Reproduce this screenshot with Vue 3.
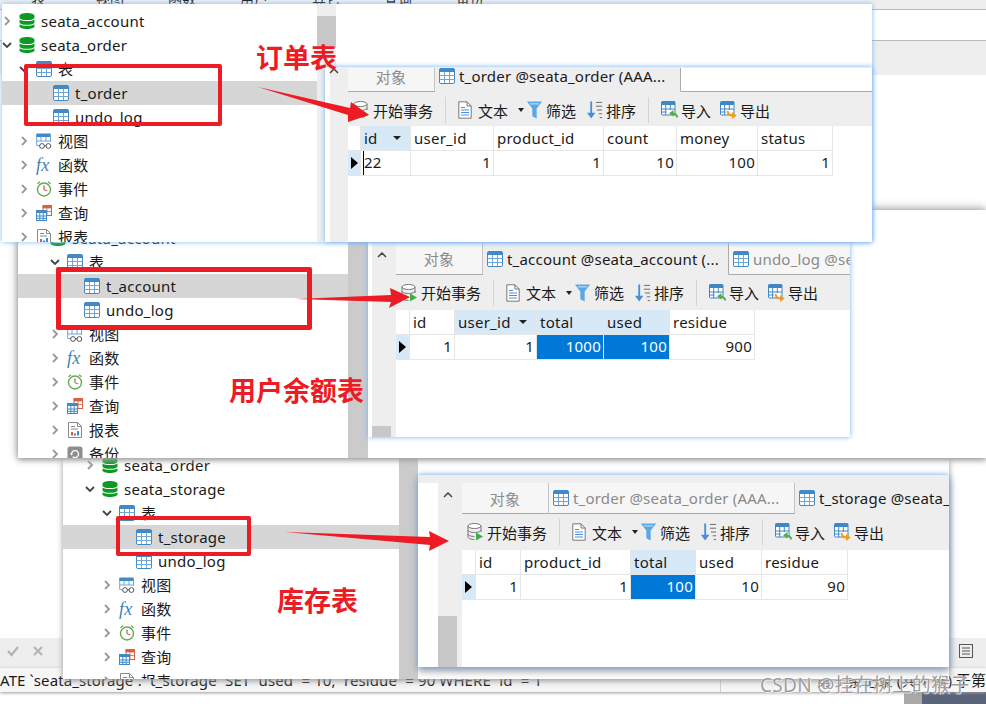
<template>
  <div class="canvas">
    <svg class="defs" width="0" height="0">
      <defs>
        <symbol id="i-db" viewBox="0 0 16 16">
          <path d="M.5 3c0-1.800 3.300-2.900 7.500-2.900s7.500 1.100 7.500 2.900v1.500c0 1.700-3.300 2.600-7.500 2.600S.5 6.200.5 4.500z" fill="#0c9a22"/>
          <path d="M.5 6.500c1.500 1.100 4.200 1.600 7.500 1.600s6-.5 7.500-1.600v2.700c0 1.700-3.300 2.600-7.500 2.600S.5 10.900.5 9.200z" fill="#0c9a22"/>
          <path d="M.5 11.200c1.500 1.100 4.200 1.600 7.500 1.600s6-.5 7.500-1.600v2c0 1.700-3.300 2.700-7.500 2.700S.5 14.900.5 13.200z" fill="#0c9a22"/>
        </symbol>
        <symbol id="i-table" viewBox="0 0 16 16">
          <rect x=".5" y=".5" width="15" height="15" rx="1.500" fill="#fff" stroke="#4289c8"/>
          <path d="M1.500.5h13a1 1 0 0 1 1 1V4H.5V1.500a1 1 0 0 1 1-1z" fill="#4289c8"/>
          <path d="M.5 7.500h15M.5 11.500h15M5.500 4v11M10.500 4v11" stroke="#6ea6d8" fill="none"/>
        </symbol>
        <symbol id="i-view" viewBox="0 0 16 16">
          <path d="M1 .5h13a.8.8 0 0 1 .8.8V4H.2V1.300A.8.8 0 0 1 1 .5z" fill="#4289c8"/>
          <path d="M.7 4v8.500h3M14.500 4v5M.7 8h13.800M5 4v4M10 4v4" stroke="#6ea6d8" fill="none"/>
          <circle cx="6" cy="13" r="2.400" fill="#fff" stroke="#555"/>
          <circle cx="12.400" cy="13" r="2.400" fill="#fff" stroke="#555"/>
          <path d="M8.400 12.800h1.600" stroke="#555"/>
        </symbol>
        <symbol id="i-clock" viewBox="0 0 16 16">
          <circle cx="8" cy="8.500" r="6.500" fill="#fff" stroke="#6aa84f" stroke-width="1.400"/>
          <path d="M8 4.500v4.200" stroke="#666" stroke-width="1.100"/>
          <path d="M8 8.700l3.200 1" stroke="#e0584a" stroke-width="1.100"/>
          <path d="M1.500 2.800L4 .8M14.500 2.800L12 .8" stroke="#6aa84f" stroke-width="1.400"/>
        </symbol>
        <symbol id="i-query" viewBox="0 0 16 16">
          <rect x="7" y=".5" width="8.500" height="10" fill="#fff" stroke="#d8623f"/>
          <path d="M7 .5h8.500v2.500H7zM11 3v7M7 6.500h8.500" fill="#d8623f" stroke="#d8623f" stroke-width=".8"/>
          <rect x=".5" y="5.500" width="10" height="10" fill="#fff" stroke="#4289c8"/>
          <path d="M.5 5.500h10v2.500H.5z" fill="#4289c8"/>
          <path d="M.5 11h10M.5 13.300h10M3.800 8v7.500M7.200 8v7.500" stroke="#4289c8" fill="none"/>
        </symbol>
        <symbol id="i-report" viewBox="0 0 16 16">
          <path d="M1.500.5h9l4 4v11h-13z" fill="#fff" stroke="#8a8a8a"/>
          <path d="M10.500.5v4h4M4 4.500h4M4 7h7" stroke="#8a8a8a" fill="none"/>
          <path d="M4 10h2v3.500H4z" fill="#e0584a"/>
          <path d="M7 11.500h2v2H7z" fill="#4289c8"/>
          <path d="M10 9h2v4.500h-2z" fill="#4289c8"/>
        </symbol>
        <symbol id="i-backup" viewBox="0 0 16 16">
          <rect x=".5" y=".5" width="15" height="15" rx="2.500" fill="#8e8e8e"/>
          <path d="M4.500 8a3.500 3.500 0 1 1 1.200 2.700" fill="none" stroke="#fff" stroke-width="1.300"/>
          <path d="M2.800 7.500h3.400L4.500 9.500z" fill="#fff"/>
        </symbol>
        <symbol id="i-dbplay" viewBox="0 0 17 18">
          <ellipse cx="7.500" cy="3" rx="6.500" ry="2.500" fill="#fff" stroke="#777"/>
          <path d="M1 3v11c0 1.400 3 2.500 6.500 2.500M14 3v6M1 7c0 1.400 3 2.500 6.500 2.500S14 8.400 14 7M1 11c0 1.400 3 2.500 6.500 2.500" fill="none" stroke="#777"/>
          <path d="M9 9.500l7 4-7 4z" fill="#3fae49"/>
        </symbol>
        <symbol id="i-doc" viewBox="0 0 14 18">
          <path d="M.8.800h8.200l4.200 4.200v12.200H.8z" fill="#fff" stroke="#777"/>
          <path d="M9 .8v4.200h4.200" fill="none" stroke="#777"/>
          <path d="M3 6.500h4M3 9h8M3 11.500h8M3 14h8" stroke="#4a90d9"/>
        </symbol>
        <symbol id="i-filter" viewBox="0 0 17 19">
          <path d="M.5.500h16L10.800 8v10.500L6.200 16V8z" fill="#5aa8e6"/>
          <path d="M3.800 3h9.400" stroke="#bcdcf5" stroke-width="1.200"/>
        </symbol>
        <symbol id="i-sort" viewBox="0 0 17 19">
          <path d="M5 .5v14" stroke="#4a90d9" stroke-width="2"/>
          <path d="M.5 12.500h9L5 18.500z" fill="#4a90d9"/>
          <path d="M10 1.500h6.500M10 5.500h6.500M11 9.500h5.500M13 13.500h3.500M14 17.500h2.500" stroke="#666"/>
        </symbol>
        <symbol id="i-import" viewBox="0 0 17 18">
          <rect x=".5" y=".5" width="13.500" height="13.500" rx="1" fill="#fff" stroke="#3f86c6"/>
          <path d="M.5.500H14V4H.5z" fill="#3f86c6"/>
          <path d="M.5 8h13.500M.5 11h5M4.700 4v10M9.300 4v5" stroke="#3f86c6" fill="none"/>
          <path d="M16.500 16.500c-1-3-3-4-5.500-4" fill="none" stroke="#4fae3f" stroke-width="2"/>
          <path d="M12.500 9v6.500L8 12.300z" fill="#4fae3f"/>
        </symbol>
        <symbol id="i-export" viewBox="0 0 17 18">
          <rect x=".5" y=".5" width="13.500" height="13.500" rx="1" fill="#fff" stroke="#3f86c6"/>
          <path d="M.5.500H14V4H.5z" fill="#3f86c6"/>
          <path d="M.5 8h13.500M.5 11h5M4.700 4v10M9.300 4v5" stroke="#3f86c6" fill="none"/>
          <path d="M7.500 10c.5 3 2.500 4.500 5 4.500" fill="none" stroke="#f39a1f" stroke-width="2"/>
          <path d="M12 11v7l4.700-3.500z" fill="#f39a1f"/>
        </symbol>
      </defs>
    </svg>

    <!-- app behind the three pasted windows -->
    <div class="base">
      <div class="menu">
        <span v-for="m in menu" :key="m">{{ m }}</span>
      </div>
      <div class="blank"></div>
      <div class="band"></div>
      <div class="fill"></div>
      <div class="tools">
        <svg class="act" viewBox="0 0 12 12"><path d="M1 6l3.500 4L11 2" /></svg>
        <svg class="act" viewBox="0 0 12 12"><path d="M2 2l8 8M10 2l-8 8" /></svg>
        <span class="tools-gap"></span>
        <svg class="form-ic" viewBox="0 0 14 14"><rect x=".5" y=".5" width="13" height="13"/><path d="M3 4h8M3 7h8M3 10h8"/></svg>
      </div>
      <div class="status">
        <span class="sql">ATE `seata_storage`. `t_storage` SET `used` = 10, `residue` = 90 WHERE `id` = 1</span>
        <i class="status-sep"></i>
        <span class="pos">第 1 条记录 (共 1 条) 于第</span>
      </div>
      <div class="foot"><i class="foot-gray"></i><i class="foot-dark"></i></div>
    </div>

    <div v-for="w in windows" :key="w.id" class="win" :class="w.id">
      <div class="tree" :style="{ width: w.treeW + 'px', paddingTop: w.treeTop + 'px' }">
        <div
          v-for="r in w.rows"
          :key="r.label"
          class="row"
          :class="{ sel: r.sel, zh: r.lv === 1 }"
          :style="{ paddingLeft: w.indent + r.lv * 17 + 'px' }"
        >
          <span class="chev">
            <svg v-if="r.chev" viewBox="0 0 10 10" :class="r.chev"><path d="M3 1l4 4-4 4" /></svg>
          </span>
          <span v-if="r.icon === 'fx'" class="fx">fx</span>
          <svg v-else class="ic"><use :href="'#i-' + r.icon" /></svg>
          <span class="lb">{{ r.label }}</span>
        </div>
      </div>
      <div class="scroll"><i></i></div>

      <div class="panel">
        <div class="strip"></div>
        <div class="body">
          <div class="gutter">
            <div class="gut-in">
              <svg class="up" viewBox="0 0 10 6"><path d="M1 5l4-4 4 4" /></svg>
              <i class="thumb"></i>
            </div>
          </div>
          <div class="main">
            <div class="tabs">
              <div v-for="t in w.tabs" :key="t.text" class="tab" :class="{ on: t.on, plain: !t.icon }" :style="{ width: t.w + 'px' }">
                <svg v-if="t.icon" class="ic"><use href="#i-table" /></svg>
                <span>{{ t.text }}</span>
              </div>
              <div class="tab-rest"></div>
            </div>
            <div class="bar">
              <div class="btn b-db"><svg class="ti"><use href="#i-dbplay" /></svg>开始事务</div>
              <i class="sep"></i>
              <div class="btn b-doc"><svg class="ti doc"><use href="#i-doc" /></svg>文本<b class="caret"></b></div>
              <div class="btn b-fil"><svg class="ti"><use href="#i-filter" /></svg>筛选</div>
              <div class="btn b-sort"><svg class="ti"><use href="#i-sort" /></svg>排序</div>
              <i class="sep"></i>
              <div class="btn b-imp"><svg class="ti"><use href="#i-import" /></svg>导入</div>
              <div class="btn"><svg class="ti"><use href="#i-export" /></svg>导出</div>
            </div>
            <div class="grid" :style="{ gridTemplateColumns: w.cols.map(c => c + 'px').join(' ') }">
              <div class="c head"></div>
              <div v-for="h in w.head" :key="h.t" class="c head" :class="{ hl: h.hl }">
                {{ h.t }}<b v-if="h.sort" class="caret sort"></b>
              </div>
              <div class="c ind"><b></b></div>
              <div
                v-for="(v, i) in w.cells"
                :key="i"
                class="c val"
                :class="{ picked: w.picked.includes(i), cur: w.cursor === i }"
              >{{ v }}</div>
            </div>
          </div>
        </div>
      </div>
    </div>

    <!-- red marks added on top of the screenshots -->
    <i class="mark m1"></i>
    <i class="mark m2"></i>
    <i class="mark m3"></i>
    <svg class="arrows" viewBox="0 0 986 704">
      <polygon points="258,87 350,108 351,102 369,115 348,122 348,115" />
      <polygon points="295,299 391,295 390,288 410,297 389,308 391,302" />
      <polygon points="285,532 430,537 429,531 449,541 429,551 430,545" />
    </svg>
    <b class="note n1">订单表</b>
    <b class="note n2">用户余额表</b>
    <b class="note n3">库存表</b>
    <div class="mark-csdn">CSDN @挂在树上的猴子</div>
  </div>
</template>

<script setup>
const menu = ['表', '视图', '函数', '用户', '其它', '查询', '备份']

function tail() {
  return [
    { lv: 1, chev: 'r', icon: 'view', label: '视图' },
    { lv: 1, chev: 'r', icon: 'fx', label: '函数' },
    { lv: 1, chev: 'r', icon: 'clock', label: '事件' },
    { lv: 1, chev: 'r', icon: 'query', label: '查询' },
    { lv: 1, chev: 'r', icon: 'report', label: '报表' },
  ]
}

const windows = [
  {
    id: 'w3',
    treeW: 336,
    treeTop: 0,
    indent: 22,
    rows: [
      { lv: 0, chev: 'r', icon: 'db', label: 'seata_order' },
      { lv: 0, chev: 'd', icon: 'db', label: 'seata_storage' },
      { lv: 1, chev: 'd', icon: 'table', label: '表' },
      { lv: 2, icon: 'table', label: 't_storage', sel: true },
      { lv: 2, icon: 'table', label: 'undo_log' },
      ...tail(),
    ],
    tabs: [
      { text: '对象', w: 87 },
      { text: 't_order @seata_order (AAA...', w: 246, icon: true },
      { text: 't_storage @seata_order', w: 200, icon: true, on: true },
    ],
    cols: [14, 45, 110, 65, 66, 86],
    head: [{ t: 'id' }, { t: 'product_id' }, { t: 'total', hl: true }, { t: 'used' }, { t: 'residue' }],
    cells: ['1', '1', '100', '10', '90'],
    picked: [2],
  },
  {
    id: 'w2',
    treeW: 330,
    treeTop: 16,
    indent: 15,
    rows: [
      { lv: 0, chev: 'd', icon: 'db', label: 'seata_account' },
      { lv: 1, chev: 'd', icon: 'table', label: '表' },
      { lv: 2, icon: 'table', label: 't_account', sel: true },
      { lv: 2, icon: 'table', label: 'undo_log' },
      ...tail(),
      { lv: 1, chev: 'r', icon: 'backup', label: '备份' },
    ],
    tabs: [
      { text: '对象', w: 87 },
      { text: 't_account @seata_account (...', w: 246, icon: true, on: true },
      { text: 'undo_log @seata_account', w: 200, icon: true },
    ],
    cols: [14, 45, 82, 67, 66, 85],
    head: [{ t: 'id' }, { t: 'user_id', hl: true, sort: true }, { t: 'total', hl: true }, { t: 'used', hl: true }, { t: 'residue' }],
    cells: ['1', '1', '1000', '100', '900'],
    picked: [2, 3],
  },
  {
    id: 'w1',
    treeW: 315,
    treeTop: 5,
    indent: 0,
    rows: [
      { lv: 0, chev: 'r', icon: 'db', label: 'seata_account' },
      { lv: 0, chev: 'd', icon: 'db', label: 'seata_order' },
      { lv: 1, chev: 'd', icon: 'table', label: '表' },
      { lv: 2, icon: 'table', label: 't_order', sel: true },
      { lv: 2, icon: 'table', label: 'undo_log' },
      ...tail(),
    ],
    tabs: [
      { text: '对象', w: 87 },
      { text: 't_order @seata_order (AAA...', w: 246, icon: true, on: true },
    ],
    cols: [13, 50, 83, 110, 73, 81, 75],
    head: [{ t: 'id', hl: true, sort: true }, { t: 'user_id' }, { t: 'product_id' }, { t: 'count' }, { t: 'money' }, { t: 'status' }],
    cells: ['22', '1', '1', '10', '100', '1'],
    picked: [],
    cursor: 0,
  },
]
</script>

<style>
html, body { background: #fff; }
</style>

<style scoped>
.canvas { position: relative; width: 986px; height: 704px; overflow: hidden; background: #fff; font-family: "Noto Sans", "Noto Sans CJK SC", sans-serif; font-size: 15px; color: #1a1a1a; }
.defs { position: absolute; }

.base { position: absolute; inset: 0; display: flex; flex-direction: column; }
.menu { height: 9px; flex: none; overflow: hidden; background: #eee; border-bottom: 1px solid #b8b8b8; display: flex; padding-left: 2px; }
.menu span { width: 72px; flex: none; text-align: center; font-size: 14px; line-height: 18px; margin-top: -10px; height: 18px; }
.blank { height: 30px; flex: none; border-bottom: 1px solid #b8b8b8; }
.band { height: 34px; flex: none; background: #eee; }
.fill { flex: 1; }
.tools { height: 30px; flex: none; background: #eee; display: flex; align-items: center; padding: 0 13px 4px 7px; box-sizing: border-box; gap: 13px; }
.act { width: 12px; height: 12px; fill: none; stroke: #b4b4b4; stroke-width: 2.200; }
.tools-gap { flex: 1; }
.form-ic { width: 14px; height: 14px; fill: none; stroke: #555; }
.status { height: 24px; flex: none; background: #f6f6f6; box-shadow: 0 1px 3px #999; line-height: 24px; white-space: nowrap; overflow: hidden; position: relative; }
.sql { letter-spacing: .1px; }
.status-sep { position: absolute; left: 720px; top: 0; width: 1px; height: 24px; background: #d0d0d0; }
.pos { position: absolute; right: 0; }
.foot { height: 12px; flex: none; display: flex; justify-content: flex-end; }
.foot-gray { width: 18px; background: #a9a9a9; }
.foot-dark { width: 64px; background: #59647a; }

.win { position: absolute; display: flex; background: #fff; }
.w1 { left: 2px; top: 4px; width: 870px; height: 238px; box-shadow: 0 0 5px #7db6f5; }
.w2 { left: 18px; top: 210px; width: 968px; height: 248px; box-shadow: 0 -1px 9px #999, 0 2px 5px #aaa; }
.w3 { left: 63px; top: 458px; width: 886px; height: 221px; box-shadow: 0 2px 6px #999; }

.tree { flex: none; box-sizing: border-box; overflow: hidden; height: 100%; }
.w3 .tree { margin-top: -5px; height: calc(100% + 5px); }
.row { height: 24px; display: flex; align-items: center; white-space: nowrap; letter-spacing: .25px; }
.row.sel { background: #d6d6d6; }
.row.zh .lb { margin-top: -2px; }
.chev { width: 17px; flex: none; display: flex; }
.chev svg { width: 10px; height: 10px; fill: none; stroke: #999; stroke-width: 1.800; }
.chev svg.d { transform: rotate(90deg); stroke: #444; }
.ic { width: 16px; height: 16px; flex: none; }
.fx { width: 16px; flex: none; font-family: "Liberation Serif", serif; font-style: italic; font-size: 18px; line-height: 16px; color: #3f7fb8; }
.lb { margin-left: 6px; }

.scroll { flex: none; height: 100%; }
.scroll i { display: block; }
.w1 .scroll { width: 19px; background: #eee; }
.w1 .scroll i { height: 32px; margin-top: 12px; background: #c8c8c8; }
.w2 .scroll { width: 20px; background: #cbcbcb; }
.w3 .scroll { width: 19px; background: #cbcbcb; }

.panel { position: absolute; display: flex; flex-direction: column; background: #fff; box-shadow: 0 0 5px #6fb0f7; overflow: hidden; }
.w1 .panel { left: 323px; top: 63px; width: 547px; height: 175px; }
.w2 .panel { left: 350px; top: 32px; width: 482px; height: 195px; }
.w3 .panel { left: 355px; top: 17px; width: 531px; height: 192px; box-shadow: 0 0 5px #6fb0f7, 0 4px 8px #999; }
.strip { flex: none; background: #eee; height: 1px; }
.w3 .strip { height: 8px; }
.body { flex: 1; display: flex; min-height: 0; }

.gutter { flex: none; display: flex; background: #fff; box-sizing: border-box; }
.w1 .gutter { width: 23px; padding-left: 5px; }
.w2 .gutter { width: 28px; padding-left: 4px; }
.w3 .gutter { width: 44px; padding-left: 20px; }
.gut-in { flex: 1; background: #eee; display: flex; flex-direction: column; }
.up { width: 10px; height: 6px; margin: 9px 0 0 5px; fill: none; stroke: #444; stroke-width: 1.500; }
.w1 .up { margin: 0 0 0 -1px; }
.thumb { margin-top: auto; height: 11px; width: 19px; background: #c8c8c8; }
.w1 .thumb { display: none; }
.w3 .thumb { height: 51px; }

.main { flex: 1; min-width: 0; overflow: hidden; display: flex; flex-direction: column; }
.tabs { flex: none; display: flex; height: 32px; overflow: hidden; }
.w1 .tabs { height: 24px; }
.w3 .tabs { height: 31px; }
.tab { flex: none; box-sizing: border-box; display: flex; align-items: center; gap: 4px; padding-left: 4px; background: #f6f6f6; border-bottom: 1px solid #aaa; border-right: 1px solid #c4c4c4; color: #8a8a8a; white-space: nowrap; letter-spacing: .2px; }
.w1 .tab { padding-bottom: 7px; }
.tab.plain { justify-content: center; padding-left: 0; }
.tab.on { background: #eee; border-bottom-color: #eee; border-right-color: #aaa; color: #1a1a1a; }
.tab-rest { flex: 1; border-bottom: 1px solid #aaa; }
.bar { flex: none; height: 35px; background: #eee; display: flex; align-items: center; padding-left: 5px; }
.w1 .bar { height: 34px; padding-top: 2px; box-sizing: border-box; }
.w3 .bar { height: 36px; }
.btn { display: flex; align-items: center; gap: 3px; white-space: nowrap; }
.ti { width: 17px; height: 18px; flex: none; }
.ti.doc { width: 14px; margin-right: 3px; }
.sep { width: 1px; height: 26px; background: #d4d4d4; margin: 0 12px; }
.b-doc { margin-right: 2px; }
.b-fil { margin-right: 10px; }
.b-imp { margin-right: 9px; }
.caret { width: 0; height: 0; border: 3px solid transparent; border-top: 4px solid #222; border-bottom: 0; margin-left: 7px; }

.grid { display: grid; width: max-content; grid-auto-rows: 25px; }
.c { box-sizing: border-box; border-right: 1px solid #e6e6e6; border-bottom: 1px solid #e6e6e6; line-height: 23px; white-space: nowrap; letter-spacing: .25px; }
.head { padding-left: 3px; display: flex; align-items: center; justify-content: space-between; padding-right: 9px; }
.head.hl { background: #d7e8f6; }
.caret.sort { margin-left: 0; border-width: 4px; border-bottom: 0; }
.ind { background: #d7e8f6; display: flex; align-items: center; justify-content: center; }
.ind b { width: 0; height: 0; border: 6px solid transparent; border-left: 7px solid #000; border-right: 0; }
.val { text-align: right; padding-right: 2px; }
.val.picked { background: #0078d7; color: #fff; }
.val.cur { text-align: left; padding-left: 3px; background: linear-gradient(#000, #000) 2px 0 / 1px 100% no-repeat; }

.mark { position: absolute; box-sizing: border-box; border: 4px solid #ed1c24; border-radius: 2px; }
.m1 { left: 24px; top: 64px; width: 198px; height: 62px; }
.m2 { left: 56px; top: 267px; width: 256px; height: 63px; border-width: 5px; }
.m3 { left: 116px; top: 516px; width: 135px; height: 40px; }
.arrows { position: absolute; inset: 0; width: 986px; height: 704px; fill: #ed1c24; pointer-events: none; }
.note { position: absolute; color: #ed1c24; font-size: 27px; line-height: 30px; font-weight: 700; font-family: "Noto Sans CJK SC", sans-serif; white-space: nowrap; }
.n1 { left: 256px; top: 42px; }
.n2 { left: 229px; top: 375px; }
.n3 { left: 277px; top: 585px; }
.mark-csdn { position: absolute; left: 760px; top: 672px; font-size: 19px; line-height: 26px; letter-spacing: .3px; color: rgba(130, 130, 130, .8); text-shadow: 0 0 1px #fff, 1px 1px 0 rgba(255, 255, 255, .6); white-space: nowrap; }
</style>
